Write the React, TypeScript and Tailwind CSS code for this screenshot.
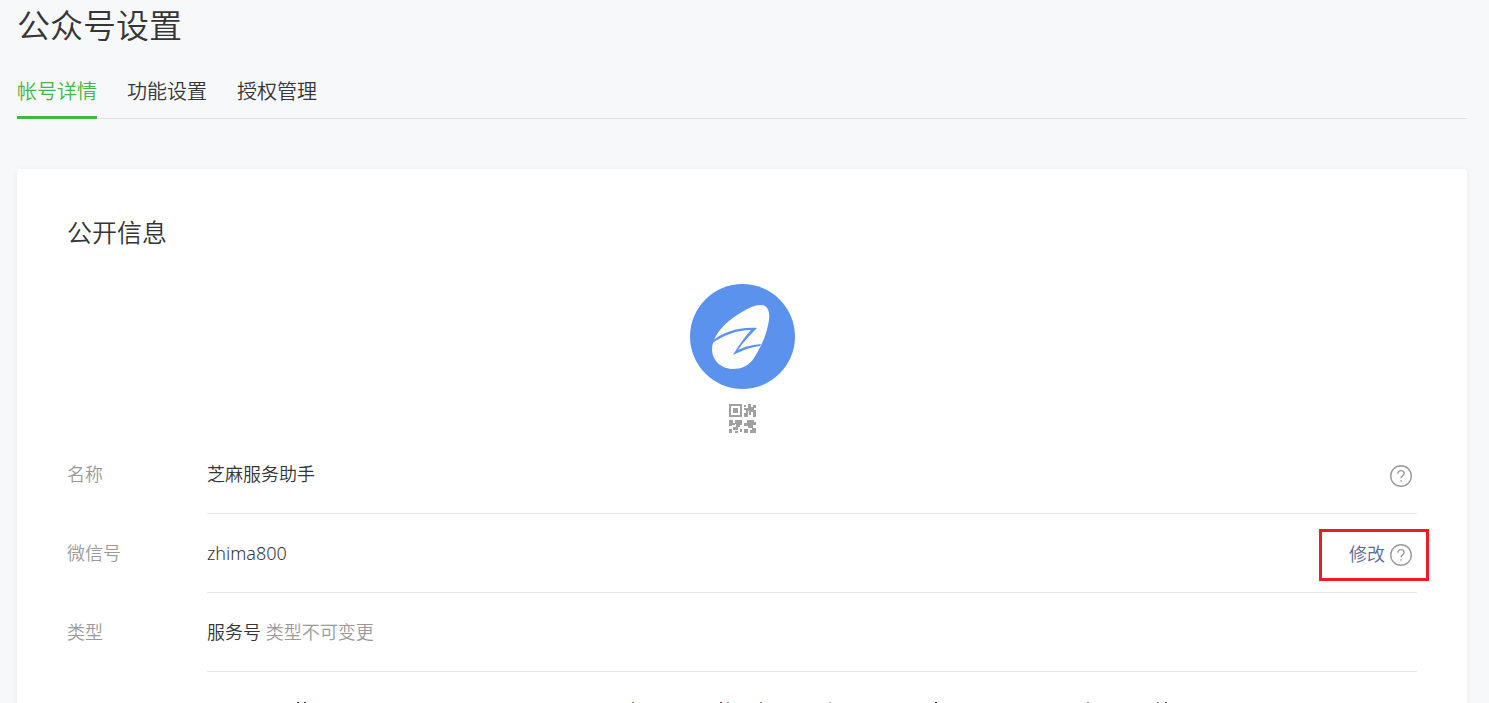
import type { ReactNode } from 'react'

const tabs = ['帐号详情', '功能设置', '授权管理']

// x position and colour of each stroke tip showing above the fold
const strokeTips = [
  [90, '#3b3b80'],
  [97, '#6b3333'],
  [425, '#b07030'],
  [513, '#7a3a3a'],
  [520, '#8fa0b0'],
  [553, '#a08060'],
  [622, '#a8a6d8'],
  [728, '#333355'],
  [880, '#80909c'],
  [950, '#7088a8'],
  [958, '#506890'],
] as const

function AccountLogo() {
  return (
    <svg viewBox="0 0 105 105" className="h-[105px] w-[105px]" role="img" aria-label="芝麻服务助手">
      <circle cx="52.5" cy="52.5" r="52.5" fill="#5b92ee" />
      <path
        d="M24 56C28 45 40 35 52 28C60 23 69 19 75 22C80 25 80 33 78 41C76 52 71 63 64 74C59 82 51 85 43 85C31 85 22 76 22 65C22 62 23 59 24 56Z"
        fill="#fdfefb"
      />
      <path
        d="M21 58C33 48 48 43 67 44C60 51 53 58 48 66C56 62 63 61 71 60L70 62C61 63 53 66 43 71C48 62 54 54 61 46C47 46 34 51 21 60Z"
        fill="#5b92ee"
      />
    </svg>
  )
}

function QrIcon() {
  return (
    <svg viewBox="0 0 28 29" className="h-[29px] w-7" fill="#a0a0a0" aria-hidden="true">
      <path fillRule="evenodd" d="M1 0h13v13H1zM3 2v9h9V2z" />
      <path d="M5 4h5v5H5z" />
      <path d="M16 1h2v2h-2zM20 0h3v3h2V1h3v3h-2v2h2v7h-3V8h-2v3h-2V7h-1v6h-4V9h2V6h-2V4h4z" />
      <path d="M1 16h4v3h2v2H4v1H1zM7 16h7v5h-2v2h-2v3H5v-3h3v-3H7zM1 25h3v4H1zM7 27h3v2H7zM12 25h2v3h-2z" />
      <path d="M19 16h7v2h2v3h-3v3h-5v-2h-4v-3h3zM16 25h4v4h-4zM24 24h4v5h-6v-3h2z" />
    </svg>
  )
}

function HelpButton({ label }: { label: string }) {
  return (
    <button type="button" aria-label={label} className="block">
      <svg viewBox="0 0 24 24" className="h-6 w-6" fill="none" stroke="#9a9a9a" strokeWidth="1.4">
        <circle cx="12" cy="12" r="10.3" />
        <path d="M8.9 9.7C8.9 7.7 10.2 6.6 12 6.6s3.1 1.1 3.1 2.8c0 2.3-3.1 2.6-3.1 4.9" />
        <path d="M12 16.2v1.6" />
      </svg>
    </button>
  )
}

function InfoRow({ label, children, action }: { label: string; children: ReactNode; action?: ReactNode }) {
  return (
    <div className="flex h-[79px]">
      <dt className="w-[140px] shrink-0 pt-[25px] leading-7 text-[#9a9a9a]">{label}</dt>
      <dd className="flex flex-1 items-start justify-between border-b border-[#e4e5e6] pt-[25px] leading-7">
        <span>{children}</span>
        {action}
      </dd>
    </div>
  )
}

export default function App() {
  return (
    <div className="h-screen overflow-hidden bg-[#f7f8fa] pr-[22px] pl-[17px] font-['Noto_Sans','Noto_Sans_CJK_SC',sans-serif] text-[18px] font-[350] text-[#353535]">
      <h1 className="pt-[2px] text-[33px] leading-[48px] font-[350]">公众号设置</h1>

      <nav className="mt-4 flex h-[53px] gap-[30px] border-b border-[#e0e1e3] text-[20px] leading-[52px]">
        {tabs.map((tab, i) => (
          <a
            key={tab}
            href="#"
            aria-current={i === 0 ? 'page' : undefined}
            className={i === 0 ? 'h-[53px] border-b-3 border-[#44b549] text-[#44b549]' : 'h-[53px]'}
          >
            {tab}
          </a>
        ))}
      </nav>

      <main className="mt-[50px] rounded-[3px] bg-white px-[50px] pt-[45px] pb-12 shadow-[0_1px_6px_rgba(0,0,0,0.06)]">
        <h2 className="text-[25px] leading-9 font-[350]">公开信息</h2>

        <div className="mt-[34px] flex flex-col items-center gap-[15px]">
          <AccountLogo />
          <button type="button" aria-label="二维码" className="block">
            <QrIcon />
          </button>
        </div>

        <dl className="mt-[2px]">
          <InfoRow
            label="名称"
            action={
              <div className="mr-1 pt-1">
                <HelpButton label="名称说明" />
              </div>
            }
          >
            芝麻服务助手
          </InfoRow>
          <InfoRow
            label="微信号"
            action={
              <div className="-mt-[10px] -mr-3 flex h-[52px] w-[110px] items-center justify-end gap-1 border-3 border-[#ed1c24] pr-[13px]">
                <a href="#" className="pb-[2px] text-[#576b95]">修改</a>
                <HelpButton label="微信号说明" />
              </div>
            }
          >
            zhima800
          </InfoRow>
          <InfoRow label="类型">
            服务号 <span className="text-[#9a9a9a]">类型不可变更</span>
          </InfoRow>
        </dl>

        <svg viewBox="0 0 970 1" className="mt-[30px] ml-[140px] h-px w-[970px]" aria-hidden="true">
          {strokeTips.map(([x, color]) => (
            <rect key={x} x={x} y="0" width="2" height="1" fill={color} />
          ))}
        </svg>
      </main>
    </div>
  )
}
